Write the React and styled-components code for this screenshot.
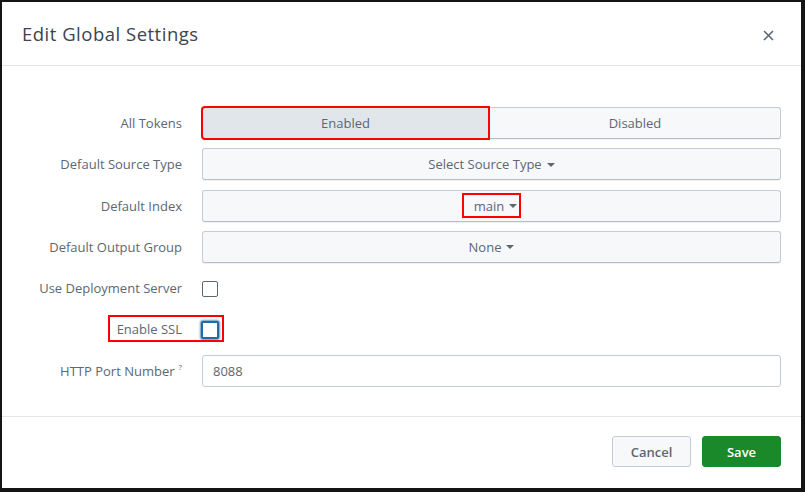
import React from "react";
import styled, { createGlobalStyle } from "styled-components";

const Global = createGlobalStyle`
  html, body { margin: 0; padding: 0; background: #fff; }
  body { font-family: "Open Sans", "Liberation Sans", sans-serif; }
  * { box-sizing: border-box; }
`;

const Frame = styled.div`
  width: 805px;
  height: 492px;
  border-style: solid;
  border-color: #141414;
  border-width: 2px 4px 4px 2px;
  background: #fff;
  display: flex;
  flex-direction: column;
`;

const Header = styled.div`
  height: 64px;
  flex: none;
  display: flex;
  align-items: center;
  justify-content: space-between;
  padding: 0 25px 0 20px;
  border-bottom: 1px solid #e1e6eb;
`;

const Title = styled.h1`
  margin: 0;
  font-size: 18.5px;
  font-weight: 500;
  color: #3c444d;
  letter-spacing: 0.5px;
`;

const Close = styled.button`
  border: 0;
  background: none;
  padding: 0;
  width: 16px;
  height: 16px;
  display: flex;
  align-items: center;
  justify-content: center;
  margin-top: 4px;
`;

const Body = styled.div`
  flex: 1;
  padding: 41px 20px 0 0;
  display: flex;
  flex-direction: column;
  gap: 9.3px;
`;

const Row = styled.div`
  position: relative;
  display: grid;
  grid-template-columns: 180px 1fr;
  column-gap: 20px;
  align-items: center;
  height: 32px;
`;

const Label = styled.div`
  text-align: right;
  font-size: 13px;
  color: #5c6773;
  white-space: nowrap;
`;

const Help = styled.sup`
  font-size: 8px;
  margin-left: 4px;
  vertical-align: 6px;
`;

const Toggle = styled.div`
  display: grid;
  grid-template-columns: 287px 1fr;
  height: 32px;
`;

const Btn = styled.button`
  height: 32px;
  border: 1px solid #c3cbd4;
  border-bottom-color: #b5bdc6;
  border-radius: ${(p) => p.$radius || "3px"};
  background: ${(p) => (p.$active ? "#e1e6eb" : "#f7f8fa")};
  box-shadow: 0 1px 0 rgba(0, 0, 0, 0.06);
  font-family: inherit;
  font-size: 13px;
  color: #5c6773;
  display: flex;
  align-items: center;
  justify-content: center;
  gap: 4px;
  padding: 0;
  position: relative;
  ${(p) => p.$marked && `outline: 2px solid #ff0000; outline-offset: -1px; z-index: 1;`}
`;

const Caret = styled.span`
  display: inline-block;
  width: 0;
  height: 0;
  border-left: 4px solid transparent;
  border-right: 4px solid transparent;
  border-top: 4.5px solid #5c6773;
  margin-left: 1px;
  margin-top: 1px;
`;

const Marked = styled.span`
  display: inline-flex;
  align-items: center;
  gap: 4px;
  border: 2px solid #ff0000;
  height: 25px;
  padding: 0 2px 0 10px;
`;

const Check = styled.span`
  width: 16px;
  height: 16px;
  border: 1px solid #5c6773;
  border-radius: 2px;
  background: #fff;
  display: block;
  margin-top: 2px;
  ${(p) =>
    p.$focus &&
    `width: 18px; height: 18px; margin-left: -1px; margin-top: 1px; border: 2px solid #1d6ea8; box-shadow: 0 0 2px 1px rgba(29,110,168,0.7);`}
`;

const Annotation = styled.div`
  position: absolute;
  left: 106px;
  top: 2px;
  width: 116px;
  height: 27px;
  border: 2px solid #ff0000;
  pointer-events: none;
`;

const Input = styled.input`
  height: 32px;
  width: 100%;
  border: 1px solid #c3cbd4;
  border-radius: 3px;
  padding: 0 10px;
  font-family: inherit;
  font-size: 13px;
  color: #5c6773;
  background: #fff;
`;

const Footer = styled.div`
  height: 72px;
  flex: none;
  border-top: 1px solid #e1e6eb;
  display: flex;
  justify-content: flex-end;
  align-items: center;
  gap: 11px;
  padding: 0 20px 2px;
`;

const FootBtn = styled.button`
  width: 79px;
  height: 31px;
  border-radius: 3px;
  font-family: inherit;
  font-size: 13px;
  font-weight: 600;
  border: 1px solid ${(p) => (p.$primary ? "#1a8929" : "#c3cbd4")};
  background: ${(p) => (p.$primary ? "#1a8929" : "#f7f8fa")};
  color: ${(p) => (p.$primary ? "#fff" : "#5c6773")};
`;

export default function App() {
  return (
    <>
      <Global />
      <Frame>
        <Header>
          <Title>Edit Global Settings</Title>
          <Close aria-label="Close">
            <svg width="11" height="11" viewBox="0 0 11 11">
              <path d="M1 1 L10 10 M10 1 L1 10" stroke="#5c6773" strokeWidth="1.6" />
            </svg>
          </Close>
        </Header>
        <Body>
          <Row>
            <Label>All Tokens</Label>
            <Toggle>
              <Btn $active $marked $radius="3px 0 0 3px">Enabled</Btn>
              <Btn $radius="0 3px 3px 0">Disabled</Btn>
            </Toggle>
          </Row>
          <Row>
            <Label>Default Source Type</Label>
            <Btn>
              Select Source Type <Caret />
            </Btn>
          </Row>
          <Row>
            <Label>Default Index</Label>
            <Btn>
              <Marked>
                main <Caret />
              </Marked>
            </Btn>
          </Row>
          <Row>
            <Label>Default Output Group</Label>
            <Btn>
              None <Caret />
            </Btn>
          </Row>
          <Row>
            <Label>Use Deployment Server</Label>
            <Check />
          </Row>
          <Row>
            <Label>Enable SSL</Label>
            <Check $focus />
            <Annotation />
          </Row>
          <Row>
            <Label>
              HTTP Port Number<Help>?</Help>
            </Label>
            <Input defaultValue="8088" />
          </Row>
        </Body>
        <Footer>
          <FootBtn>Cancel</FootBtn>
          <FootBtn $primary>Save</FootBtn>
        </Footer>
      </Frame>
    </>
  );
}
